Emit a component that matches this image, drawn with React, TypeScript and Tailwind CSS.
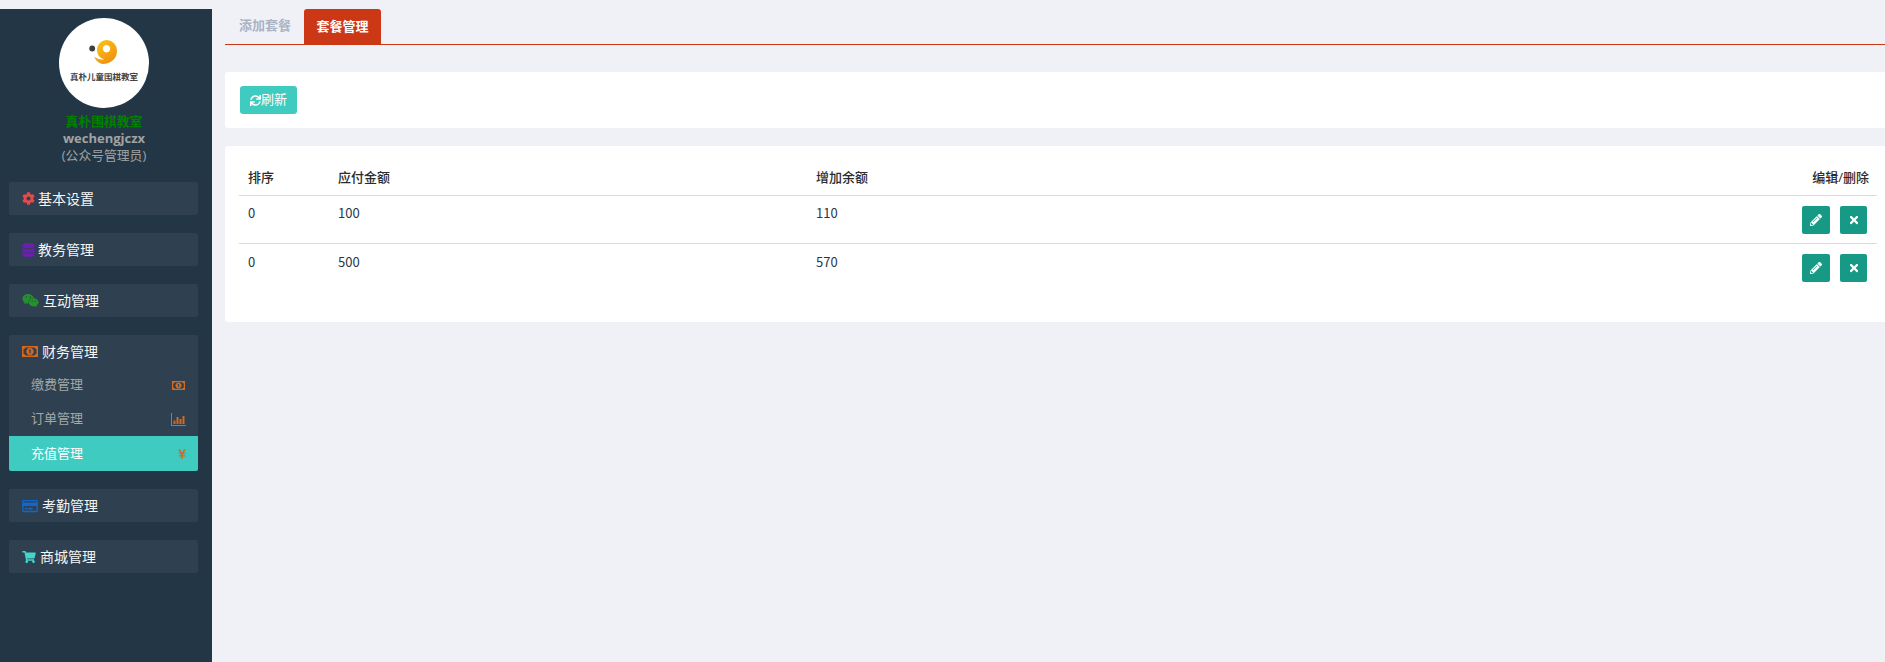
import React from "react";
import { FaCog, FaDatabase, FaWeixin, FaShoppingCart, FaSync, FaPencilAlt, FaTimes, FaYenSign, FaRegCreditCard } from "react-icons/fa";

const font = { fontFamily: '"Open Sans","Noto Sans CJK SC",sans-serif' };
const cjk = { fontFamily: '"Noto Sans CJK SC",sans-serif' };

function Money({ className }: { className?: string }) {
  return (
    <svg viewBox="0 0 16 11" className={className}>
      <path fillRule="evenodd" fill="currentColor" d="M0 0h16v11H0zM1.5 3.2v4.6a2 2 0 0 1 1.8 1.8h9.4a2 2 0 0 1 1.8-1.8V3.2a2 2 0 0 1-1.8-1.8H3.3a2 2 0 0 1-1.8 1.8z" />
      <path fillRule="evenodd" fill="currentColor" d="M8 1.8a3.7 3.7 0 1 0 .01 0zM7.2 3.6h1.5v3.8H7.5V4.7l-.6.3z" />
    </svg>
  );
}

function Bars({ className }: { className?: string }) {
  return (
    <svg viewBox="0 0 15 13" className={className}>
      <path fill="currentColor" d="M0 0h1v12h14v1H0zM2.5 7.5h2V11h-2zM5.5 4h2v7h-2zM8.5 6h2v5h-2zM11.5 3h2v8h-2z" />
    </svg>
  );
}

function Head({ icon, label, gap }: { icon: React.ReactNode; label: string; gap: string }) {
  return (
    <div className={`flex h-[33px] items-center pl-[13px] text-[14px] leading-none text-[#f4f6f6] ${gap}`}>
      {icon}
      <span>{label}</span>
    </div>
  );
}

function Menu({ icon, label, gap }: { icon: React.ReactNode; label: string; gap: string }) {
  return (
    <div className="ml-[9px] mr-[14px] mb-[18px] rounded-[2px] bg-[#2f4050]">
      <Head icon={icon} label={label} gap={gap} />
    </div>
  );
}

function Sub({ label, icon, active }: { label: string; icon: React.ReactNode; active?: boolean }) {
  return (
    <div className={`flex items-center justify-between pl-[22px] pr-[12px] text-[13px] ${active ? "h-[35px] rounded-b-[2px] bg-[#40cbc0] text-white" : "h-[34px] text-[#a3a8a8]"}`}>
      <span>{label}</span>
      {icon}
    </div>
  );
}

function Action({ icon, width }: { icon: React.ReactNode; width: string }) {
  return (
    <button className={`flex h-[28px] items-center justify-center rounded-[2px] bg-[#169a85] text-white ${width}`}>
      {icon}
    </button>
  );
}

function Row({ a, b, c, line }: { a: string; b: string; c: string; line?: boolean }) {
  return (
    <tr className={`h-[48px] text-[#26384a] ${line ? "border-b border-[#dcdcdc]" : ""}`} style={cjk}>
      <td className="pb-[12px] pl-[9px] align-middle">{a}</td>
      <td className="pb-[12px] pl-[9px] align-middle">{b}</td>
      <td className="pb-[12px] pl-[9px] align-middle">{c}</td>
      <td className="pr-[10px] pt-[10px] align-top">
        <div className="flex justify-end gap-[10px]">
          <Action width="w-[28px]" icon={<FaPencilAlt className="h-[12px] w-[12px]" />} />
          <Action width="w-[27px]" icon={<FaTimes className="h-[12px] w-[10px]" />} />
        </div>
      </td>
    </tr>
  );
}

export default function App() {
  return (
    <div className="flex h-[662px] w-full overflow-hidden bg-[#f0f1f7] text-[13px]" style={font}>
      <aside className="mt-[9px] flex w-[212px] shrink-0 flex-col bg-[#233646]">
        <div className="flex flex-col items-center pr-[4px] pt-[9px]">
          <div className="flex h-[90px] w-[90px] flex-col items-center rounded-full bg-white pt-[20px]">
            <svg viewBox="0 0 30 28" className="h-[28px] w-[30px]">
              <defs>
                <linearGradient id="g" x1="0.2" y1="0" x2="0.9" y2="1">
                  <stop offset="0" stopColor="#f9c515" />
                  <stop offset="1" stopColor="#ee8a10" />
                </linearGradient>
              </defs>
              <circle cx="3.2" cy="10.5" r="2.9" fill="#3d3d3d" />
              <path fillRule="evenodd" fill="url(#g)" d="M18 2a10.5 10.5 0 0 1 10 11c0 8-7 13-14 13C10 26 6.5 22 5 18.5c3 2.6 7 3.5 10 2.8A10 10 0 0 1 8 12C8 6 13 2 18 2zm-.5 5a3.7 3.7 0 1 0 .01 0z" />
            </svg>
            <span className="mt-[5px] whitespace-nowrap text-[8.5px] font-bold leading-[12px] text-[#444]">真朴儿童围棋教室</span>
          </div>
          <div className="mt-[5px] text-[12.8px] font-bold leading-[17px] text-[#008000]">真朴围棋教室</div>
          <div className="text-[13px] font-bold leading-[17px] text-[#a2a2a2]">wechengjczx</div>
          <div className="text-[12.8px] leading-[16px] text-[#a2a2a2]">(公众号管理员)</div>
        </div>
        <div className="mt-[19px]">
          <Menu gap="gap-[3px]" label="基本设置" icon={<FaCog className="h-[13px] w-[13px] text-[#e04b4b]" />} />
          <Menu gap="gap-[3px]" label="教务管理" icon={<FaDatabase className="h-[14px] w-[13px] text-[#6a1fb0]" />} />
          <Menu gap="gap-[4px]" label="互动管理" icon={<FaWeixin className="h-[15px] w-[17px] text-[#24922c]" />} />
          <div className="ml-[9px] mr-[14px] mb-[18px] rounded-[2px] bg-[#2f4050]">
            <Head gap="gap-[4px]" label="财务管理" icon={<Money className="h-[11px] w-[16px] text-[#d2691e]" />} />
            <Sub label="缴费管理" icon={<Money className="h-[9px] w-[15px] text-[#d2691e]" />} />
            <Sub label="订单管理" icon={<Bars className="h-[13px] w-[15px] text-[#d2691e]" />} />
            <Sub active label="充值管理" icon={<FaYenSign className="h-[12px] w-[8px] text-[#d2691e]" />} />
          </div>
          <Menu gap="gap-[4px]" label="考勤管理" icon={<FaRegCreditCard className="h-[14px] w-[16px] text-[#1467c8]" />} />
          <Menu gap="gap-[4px]" label="商城管理" icon={<FaShoppingCart className="h-[12px] w-[14px] text-[#40d6cb]" />} />
        </div>
      </aside>
      <main className="min-w-0 flex-1 pl-[13px]">
        <div className="mt-[9px] flex h-[36px] items-stretch border-b border-[#cc3816] pl-[14px]">
          <div className="flex items-center pb-[1px] pr-[13px] font-semibold text-[#a9b3c4]">添加套餐</div>
          <div className="flex w-[77px] items-center justify-center rounded-t-[3px] bg-[#cc3816] font-semibold text-white">套餐管理</div>
        </div>
        <section className="mt-[27px] flex h-[56px] items-center rounded-l-[3px] bg-white pl-[15px]">
          <button className="flex h-[28px] w-[57px] items-center justify-center rounded-[3px] bg-[#40cbc0] text-white">
            <FaSync className="h-[11px] w-[11px]" />
            <span>刷新</span>
          </button>
        </section>
        <section className="mt-[18px] h-[176px] rounded-l-[3px] bg-white pl-[14px] pr-[8px] pt-[14px]">
          <table className="w-full table-fixed border-collapse">
            <colgroup>
              <col className="w-[90px]" />
              <col className="w-[478px]" />
              <col className="w-[300px]" />
              <col />
            </colgroup>
            <thead>
              <tr className="h-[35px] border-b border-[#dcdcdc] text-[#2b2b2b]">
                <th className="pl-[9px] text-left font-medium">排序</th>
                <th className="pl-[9px] text-left font-medium">应付金额</th>
                <th className="pl-[9px] text-left font-medium">增加余额</th>
                <th className="pr-[8px] text-right font-medium">编辑/删除</th>
              </tr>
            </thead>
            <tbody>
              <Row line a="0" b="100" c="110" />
              <Row a="0" b="500" c="570" />
            </tbody>
          </table>
        </section>
      </main>
    </div>
  );
}
